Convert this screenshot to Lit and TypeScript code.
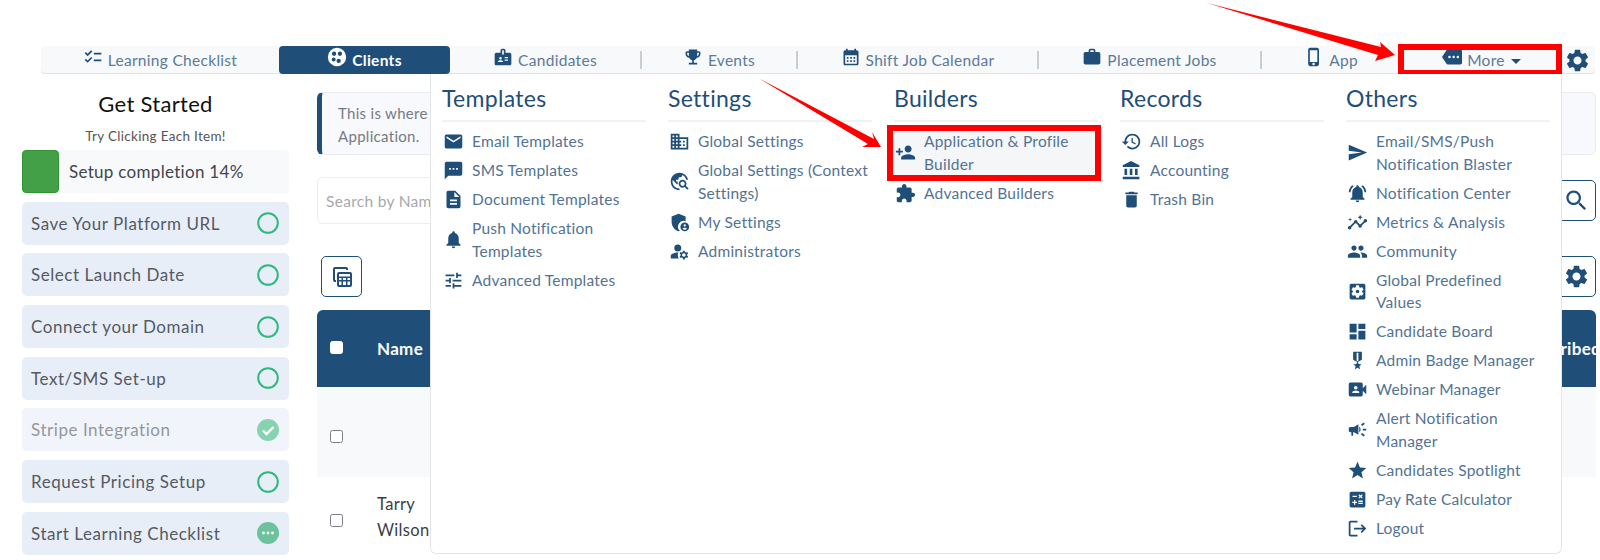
import { LitElement, html, css } from "lit";
import { customElement } from "lit/decorators.js";

const I: Record<string, string> = {
  checklist: "M22 7h-9v2h9V7zm0 8h-9v2h9v-2zM5.54 11L2 7.46l1.41-1.41 2.12 2.12 4.24-4.24 1.41 1.41L5.54 11zm0 8L2 15.46l1.41-1.41 2.12 2.12 4.24-4.24 1.41 1.41L5.54 19z",
  clients: "M12 1a11 11 0 1 0 0 22 11 11 0 0 0 0-22zM8.5 5.5a2.6 2.6 0 1 1 0 5.2 2.6 2.6 0 0 1 0-5.2zm7 0a2.6 2.6 0 1 1 0 5.2 2.6 2.6 0 0 1 0-5.2zM8 12.5a2.4 2.4 0 1 1 0 4.8 2.4 2.4 0 0 1 0-4.8zm6 1.5a2.6 2.6 0 1 1 0 5.2 2.6 2.6 0 0 1 0-5.2z",
  badge: "M20 7h-5V4c0-1.1-.9-2-2-2h-2c-1.1 0-2 .9-2 2v3H4c-1.1 0-2 .9-2 2v11c0 1.1.9 2 2 2h16c1.1 0 2-.9 2-2V9c0-1.1-.9-2-2-2zM9 12c.83 0 1.5.67 1.5 1.5S9.83 15 9 15s-1.5-.67-1.5-1.5S8.17 12 9 12zm3 6H6v-.75c0-1 2-1.5 3-1.5s3 .5 3 1.5V18zm1-9h-2V4h2v5zm5 7.5h-4V15h4v1.5zm0-3h-4V12h4v1.5z",
  trophy: "M19 5h-2V3H7v2H5c-1.1 0-2 .9-2 2v1c0 2.55 1.92 4.63 4.39 4.94.63 1.5 1.98 2.63 3.61 2.96V19H7v2h10v-2h-4v-3.1c1.63-.33 2.98-1.46 3.61-2.96C19.08 12.63 21 10.55 21 8V7c0-1.1-.9-2-2-2zM5 8V7h2v3.82C5.84 10.4 5 9.3 5 8zm14 0c0 1.3-.84 2.4-2 2.82V7h2v1z",
  calendar: "M19 4h-1V2h-2v2H8V2H6v2H5c-1.1 0-2 .9-2 2v14c0 1.1.9 2 2 2h14c1.1 0 2-.9 2-2V6c0-1.1-.9-2-2-2zm0 16H5V10h14v10zM9 14H7v-2h2v2zm4 0h-2v-2h2v2zm4 0h-2v-2h2v2zm-8 4H7v-2h2v2zm4 0h-2v-2h2v2zm4 0h-2v-2h2v2z",
  work: "M20 6h-4V4c0-1.11-.89-2-2-2h-4c-1.11 0-2 .89-2 2v2H4c-1.11 0-1.99.89-1.99 2L2 19c0 1.11.89 2 2 2h16c1.11 0 2-.89 2-2V8c0-1.11-.89-2-2-2zm-6 0h-4V4h4v2z",
  phone: "M15.5 1h-8C6.12 1 5 2.12 5 3.5v17C5 21.88 6.12 23 7.5 23h8c1.38 0 2.5-1.12 2.5-2.5v-17C18 2.12 16.88 1 15.5 1zm-4 21c-.83 0-1.5-.67-1.5-1.5s.67-1.5 1.5-1.5 1.5.67 1.5 1.5-.67 1.5-1.5 1.5zm4.5-4H7V4h9v14z",
  more: "M22 3H7c-.69 0-1.23.35-1.59.88L0 12l5.41 8.11c.36.53.9.89 1.59.89h15c1.1 0 2-.9 2-2V5c0-1.1-.9-2-2-2zM9 13.5c-.83 0-1.5-.67-1.5-1.5s.67-1.5 1.5-1.5 1.5.67 1.5 1.5-.67 1.5-1.5 1.5zm5 0c-.83 0-1.5-.67-1.5-1.5s.67-1.5 1.5-1.5 1.5.67 1.5 1.5-.67 1.5-1.5 1.5zm5 0c-.83 0-1.5-.67-1.5-1.5s.67-1.5 1.5-1.5 1.5.67 1.5 1.5-.67 1.5-1.5 1.5z",
  gear: "M19.14 12.94c.04-.3.06-.61.06-.94 0-.32-.02-.64-.07-.94l2.03-1.58c.18-.14.23-.41.12-.61l-1.92-3.32c-.12-.22-.37-.29-.59-.22l-2.39.96c-.5-.38-1.03-.7-1.62-.94l-.36-2.54c-.04-.24-.24-.41-.48-.41h-3.84c-.24 0-.43.17-.47.41l-.36 2.54c-.59.24-1.13.57-1.62.94l-2.39-.96c-.22-.08-.47 0-.59.22L2.74 8.87c-.12.21-.08.47.12.61l2.03 1.58c-.05.3-.09.63-.09.94s.02.64.07.94l-2.03 1.58c-.18.14-.23.41-.12.61l1.92 3.32c.12.22.37.29.59.22l2.39-.96c.5.38 1.03.7 1.62.94l.36 2.54c.05.24.24.41.48.41h3.84c.24 0 .44-.17.47-.41l.36-2.54c.59-.24 1.13-.56 1.62-.94l2.39.96c.22.08.47 0 .59-.22l1.92-3.32c.12-.22.07-.47-.12-.61l-2.01-1.58zM12 15.6c-1.98 0-3.6-1.62-3.6-3.6s1.62-3.6 3.6-3.6 3.6 1.62 3.6 3.6-1.62 3.6-3.6 3.6z",
  search: "M15.5 14h-.79l-.28-.27C15.41 12.59 16 11.11 16 9.5 16 5.91 13.09 3 9.5 3S3 5.91 3 9.5 5.91 16 9.5 16c1.61 0 3.09-.59 4.23-1.57l.27.28v.79l5 4.99L20.49 19l-4.99-5zm-6 0C7.01 14 5 11.99 5 9.5S7.01 5 9.5 5 14 7.01 14 9.5 11.99 14 9.5 14z",
  columns: "M5 2h11a2 2 0 0 1 2 2v1h-2V4H5v11h1v2H5a2 2 0 0 1-2-2V4a2 2 0 0 1 2-2zM9 7h11a2 2 0 0 1 2 2v11a2 2 0 0 1-2 2H9a2 2 0 0 1-2-2V9a2 2 0 0 1 2-2zm0 2v2.5h11V9H9zm0 4v2h2.5v-2H9zm4 0v2h3v-2h-3zm4.5 0v2H20v-2h-2.5zM9 16.5V20h2.5v-3.5H9zm4 0V20h3v-3.5h-3zm4.5 0V20H20v-3.5h-2.5z",
  mail: "M20 4H4c-1.1 0-1.99.9-1.99 2L2 18c0 1.1.9 2 2 2h16c1.1 0 2-.9 2-2V6c0-1.1-.9-2-2-2zm0 4l-8 5-8-5V6l8 5 8-5v2z",
  sms: "M20 2H4c-1.1 0-1.99.9-1.99 2L2 22l4-4h14c1.1 0 2-.9 2-2V4c0-1.1-.9-2-2-2zM9 11H7V9h2v2zm4 0h-2V9h2v2zm4 0h-2V9h2v2z",
  doc: "M14 2H6c-1.1 0-1.99.9-1.99 2L4 20c0 1.1.89 2 1.99 2H18c1.1 0 2-.9 2-2V8l-6-6zm2 16H8v-2h8v2zm0-4H8v-2h8v2zm-3-5V3.5L18.5 9H13z",
  bell: "M12 22c1.1 0 2-.9 2-2h-4c0 1.1.89 2 2 2zm6-6v-5c0-3.07-1.64-5.64-4.5-6.32V4c0-.83-.67-1.5-1.5-1.5s-1.5.67-1.5 1.5v.68C7.63 5.36 6 7.92 6 11v5l-2 2v1h16v-1l-2-2z",
  tune: "M3 17v2h6v-2H3zM3 5v2h10V5H3zm10 16v-2h8v-2h-8v-2h-2v6h2zM7 9v2H3v2h4v2h2V9H7zm14 4v-2H11v2h10zm-6-4h2V7h4V5h-4V3h-2v6z",
  domain: "M12 7V3H2v18h20V7H12zM6 19H4v-2h2v2zm0-4H4v-2h2v2zm0-4H4V9h2v2zm0-4H4V5h2v2zm4 12H8v-2h2v2zm0-4H8v-2h2v2zm0-4H8V9h2v2zm0-4H8V5h2v2zm10 12h-8v-2h2v-2h-2v-2h2v-2h-2V9h8v10zm-2-8h-2v2h2v-2zm0 4h-2v2h2v-2z",
  explore: "M19.3 16.9c.4-.7.7-1.5.7-2.4 0-2.5-2-4.5-4.5-4.5S11 12 11 14.5s2 4.5 4.5 4.5c.9 0 1.7-.3 2.4-.7l3.2 3.2 1.4-1.4-3.2-3.2zm-3.8.1c-1.4 0-2.5-1.1-2.5-2.5s1.1-2.5 2.5-2.5 2.5 1.1 2.5 2.5-1.1 2.5-2.5 2.5zM12 20v2C6.48 22 2 17.52 2 12S6.48 2 12 2c4.84 0 8.87 3.44 9.8 8h-2.07c-.64-2.46-2.4-4.47-4.73-5.41V5c0 1.1-.9 2-2 2h-2v2c0 .55-.45 1-1 1H8v2h2v3H9l-4.79-4.79C4.08 10.79 4 11.38 4 12c0 4.41 3.59 8 8 8z",
  shield: "M11 2L3 5v6c0 5 3.4 9.7 8 11 .5-.1 1-.3 1.4-.5A6.5 6.5 0 0 1 19 10.6V5l-8-3zM18 12a5 5 0 1 0 0 10 5 5 0 0 0 0-10zm0 2a1.3 1.3 0 1 1 0 2.6 1.3 1.3 0 0 1 0-2.6zm0 6.3c-1 0-1.9-.4-2.4-1.1.1-.8 1.6-1.2 2.4-1.2s2.3.4 2.4 1.2c-.5.7-1.4 1.1-2.4 1.1z",
  manage: "M10 4a4 4 0 1 1 0 8 4 4 0 0 1 0-8zM10.67 13.02C10.45 13.01 10.23 13 10 13c-2.42 0-4.68.67-6.61 1.82-.88.52-1.39 1.5-1.39 2.53V20h9.26c-.79-1.13-1.26-2.51-1.26-4 0-1.07.25-2.07.67-2.98zM20.75 16c0-.22-.03-.42-.06-.63l1.14-1.01-1-1.73-1.45.49c-.32-.27-.68-.48-1.08-.63L18 11h-2l-.3 1.49c-.4.15-.76.36-1.08.63l-1.45-.49-1 1.73 1.14 1.01c-.03.21-.06.41-.06.63s.03.42.06.63l-1.14 1.01 1 1.73 1.45-.49c.32.27.68.48 1.08.63L16 21h2l.3-1.49c.4-.15.76-.36 1.08-.63l1.45.49 1-1.73-1.14-1.01c.03-.21.06-.41.06-.63zM17 18c-1.1 0-2-.9-2-2s.9-2 2-2 2 .9 2 2-.9 2-2 2z",
  personAdd: "M15 12c2.21 0 4-1.79 4-4s-1.79-4-4-4-4 1.79-4 4 1.79 4 4 4zm-9-2V7H4v3H1v2h3v3h2v-3h3v-2H6zm9 4c-2.67 0-8 1.34-8 4v2h16v-2c0-2.66-5.33-4-8-4z",
  puzzle: "M20.5 11H19V7c0-1.1-.9-2-2-2h-4V3.5C13 2.12 11.88 1 10.5 1S8 2.12 8 3.5V5H4c-1.1 0-1.99.9-1.99 2v3.8H3.5c1.49 0 2.7 1.21 2.7 2.7s-1.21 2.7-2.7 2.7H2V20c0 1.1.9 2 2 2h3.8v-1.5c0-1.49 1.21-2.7 2.7-2.7 1.49 0 2.7 1.21 2.7 2.7V22H17c1.1 0 2-.9 2-2v-4h1.5c1.38 0 2.5-1.12 2.5-2.5S21.88 11 20.5 11z",
  history: "M13 3c-4.97 0-9 4.03-9 9H1l3.89 3.89.07.14L9 12H6c0-3.87 3.13-7 7-7s7 3.13 7 7-3.13 7-7 7c-1.93 0-3.68-.79-4.94-2.06l-1.42 1.42C8.27 19.99 10.51 21 13 21c4.97 0 9-4.03 9-9s-4.03-9-9-9zm-1 5v5l4.28 2.54.72-1.21-3.5-2.08V8H12z",
  bank: "M4 10v7h3v-7H4zm6 0v7h3v-7h-3zM2 22h19v-3H2v3zm14-12v7h3v-7h-3zm-4.5-9L2 6v2h19V6l-9.5-5z",
  trash: "M6 19c0 1.1.9 2 2 2h8c1.1 0 2-.9 2-2V7H6v12zM19 4h-3.5l-1-1h-5l-1 1H5v2h14V4z",
  send: "M2.01 21L23 12 2.01 3 2 10l15 2-15 2z",
  bellActive: "M7.58 4.08L6.15 2.65C3.75 4.48 2.17 7.3 2.03 10.5h2c.15-2.65 1.51-4.97 3.55-6.42zm12.39 6.42h2c-.15-3.2-1.73-6.02-4.12-7.85l-1.42 1.43c2.02 1.45 3.39 3.77 3.54 6.42zM18 11c0-3.07-1.64-5.64-4.5-6.32V4c0-.83-.67-1.5-1.5-1.5s-1.5.67-1.5 1.5v.68C7.63 5.36 6 7.92 6 11v5l-2 2v1h16v-1l-2-2v-5zm-6 11c.14 0 .27-.01.4-.04.65-.14 1.18-.58 1.44-1.18.1-.24.15-.5.15-.78h-4c.01 1.1.9 2 2.01 2z",
  insights: "M21 8c-1.45 0-2.26 1.44-1.93 2.51l-3.55 3.56c-.3-.09-.74-.09-1.04 0l-2.55-2.55C12.27 10.45 11.46 9 10 9c-1.45 0-2.27 1.44-1.93 2.52l-4.56 4.55C2.44 15.74 1 16.55 1 18c0 1.1.9 2 2 2 1.45 0 2.26-1.44 1.93-2.51l4.55-4.56c.3.09.74.09 1.04 0l2.55 2.55C12.73 16.55 13.54 18 15 18c1.45 0 2.27-1.44 1.93-2.52l3.56-3.55c1.07.33 2.51-.48 2.51-1.93 0-1.1-.9-2-2-2zM15 9l.94-2.07L18 6l-2.06-.93L15 3l-.92 2.07L12 6l2.08.93zM3.5 11L4 9l2-.5L4 8l-.5-2L3 8l-2 .5L3 9z",
  people: "M16 11c1.66 0 2.99-1.34 2.99-3S17.66 5 16 5c-1.66 0-3 1.34-3 3s1.34 3 3 3zm-8 0c1.66 0 2.99-1.34 2.99-3S9.66 5 8 5C6.34 5 5 6.34 5 8s1.34 3 3 3zm0 2c-2.33 0-7 1.17-7 3.5V19h14v-2.5c0-2.33-4.67-3.5-7-3.5zm8 0c-.29 0-.62.02-.97.05 1.16.84 1.97 1.97 1.97 3.45V19h6v-2.5c0-2.33-4.67-3.5-7-3.5z",
  appSettings: "M12 10c-1.1 0-2 .9-2 2s.9 2 2 2 2-.9 2-2-.9-2-2-2zm7-7H5c-1.11 0-2 .9-2 2v14c0 1.1.89 2 2 2h14c1.11 0 2-.9 2-2V5c0-1.1-.89-2-2-2zm-1.75 9c0 .23-.02.46-.05.68l1.48 1.16c.13.11.17.3.08.45l-1.4 2.42c-.09.15-.27.21-.43.15l-1.74-.7c-.36.28-.76.51-1.18.69l-.26 1.85c-.03.17-.18.3-.35.3h-2.8c-.17 0-.32-.13-.35-.29l-.26-1.85c-.43-.18-.82-.41-1.18-.69l-1.74.7c-.16.06-.34 0-.43-.15l-1.4-2.42c-.09-.15-.05-.34.08-.45l1.48-1.16c-.03-.23-.05-.46-.05-.69 0-.23.02-.46.05-.68l-1.48-1.16c-.13-.11-.17-.3-.08-.45l1.4-2.42c.09-.15.27-.21.43-.15l1.74.7c.36-.28.76-.51 1.18-.69l.26-1.85c.03-.17.18-.3.35-.3h2.8c.17 0 .32.13.35.29l.26 1.85c.43.18.82.41 1.18.69l1.74-.7c.16-.06.34 0 .43.15l1.4 2.42c.09.15.05.34-.08.45l-1.48 1.16c.03.23.05.46.05.69z",
  board: "M3 13h8V3H3v10zm0 8h8v-6H3v6zm10 0h8V11h-8v10zm0-18v6h8V3h-8z",
  medal: "M17 10.43V2H7v8.43c0 .35.18.68.49.86l4.18 2.51-.99 2.34-3.41.29 2.59 2.24L9.07 22 12 20.23 14.93 22l-.78-3.33 2.59-2.24-3.41-.29-.99-2.34 4.18-2.51c.3-.18.48-.5.48-.86zm-4 1.8l-1 .6-1-.6V3h2v9.23z",
  video: "M18 10.48V6c0-1.1-.9-2-2-2H4c-1.1 0-2 .9-2 2v12c0 1.1.9 2 2 2h12c1.1 0 2-.9 2-2v-4.48l4 3.98v-11l-4 3.98zM10 8c1.1 0 2 .9 2 2s-.9 2-2 2-2-.9-2-2 .9-2 2-2zm4 8H6v-.57c0-.81.48-1.53 1.22-1.85.85-.37 1.79-.58 2.78-.58.99 0 1.93.21 2.78.58.74.32 1.22 1.04 1.22 1.85V16z",
  campaign: "M18 11v2h4v-2h-4zm-2 6.61c.96.71 2.21 1.65 3.2 2.39.4-.53.8-1.07 1.2-1.6-.99-.74-2.24-1.68-3.2-2.4-.4.54-.8 1.08-1.2 1.61zM20.4 5.6c-.4-.53-.8-1.07-1.2-1.6-.99.74-2.24 1.68-3.2 2.4.4.53.8 1.07 1.2 1.6.96-.72 2.21-1.65 3.2-2.4zM4 9c-1.1 0-2 .9-2 2v2c0 1.1.9 2 2 2h1v4h2v-4h1l5 3V6L8 9H4zm11.5 3c0-1.33-.58-2.53-1.5-3.35v6.69c.92-.81 1.5-2.01 1.5-3.34z",
  star: "M12 17.27L18.18 21l-1.64-7.03L22 9.24l-7.19-.61L12 2 9.19 8.63 2 9.24l5.46 4.73L5.82 21z",
  calc: "M19 3H5c-1.1 0-2 .9-2 2v14c0 1.1.9 2 2 2h14c1.1 0 2-.9 2-2V5c0-1.1-.9-2-2-2zm-5.97 4.06L14.09 6l1.41 1.41L16.91 6l1.06 1.06-1.41 1.41 1.41 1.41-1.06 1.06-1.41-1.4-1.41 1.41-1.06-1.06 1.41-1.41-1.41-1.42zm-6.78.66h5v1.5h-5v-1.5zM11.5 16h-2v2H8v-2H6v-1.5h2v-2h1.5v2h2V16zm6.5 1.25h-5v-1.5h5v1.5zm0-2.5h-5v-1.5h5v1.5z",
  logout: "M17 7l-1.41 1.41L18.17 11H8v2h10.17l-2.58 2.58L17 17l5-5zM4 5h8V3H4c-1.1 0-2 .9-2 2v14c0 1.1.9 2 2 2h8v-2H4V5z",
};

const tabs = [
  { label: "Learning Checklist", icon: "checklist", w: 238 },
  { label: "Clients", icon: "clients", w: 171, active: true },
  { label: "Candidates", icon: "badge", w: 190, sep: true },
  { label: "Events", icon: "trophy", w: 154, sep: true },
  { label: "Shift Job Calendar", icon: "calendar", w: 239, sep: true },
  { label: "Placement Jobs", icon: "work", w: 221, sep: true },
  { label: "App", icon: "phone", w: 138 },
  { label: "More", icon: "more", w: 160, more: true },
];

const columns = [
  {
    title: "Templates",
    items: [
      ["mail", "Email Templates"],
      ["sms", "SMS Templates"],
      ["doc", "Document Templates"],
      ["bell", "Push Notification Templates"],
      ["tune", "Advanced Templates"],
    ],
  },
  {
    title: "Settings",
    items: [
      ["domain", "Global Settings"],
      ["explore", "Global Settings (Context Settings)"],
      ["shield", "My Settings"],
      ["manage", "Administrators"],
    ],
  },
  {
    title: "Builders",
    items: [
      ["personAdd", "Application & Profile Builder"],
      ["puzzle", "Advanced Builders"],
    ],
  },
  {
    title: "Records",
    items: [
      ["history", "All Logs"],
      ["bank", "Accounting"],
      ["trash", "Trash Bin"],
    ],
  },
  {
    title: "Others",
    items: [
      ["send", "Email/SMS/Push Notification Blaster"],
      ["bellActive", "Notification Center"],
      ["insights", "Metrics & Analysis"],
      ["people", "Community"],
      ["appSettings", "Global Predefined Values"],
      ["board", "Candidate Board"],
      ["medal", "Admin Badge Manager"],
      ["video", "Webinar Manager"],
      ["campaign", "Alert Notification Manager"],
      ["star", "Candidates Spotlight"],
      ["calc", "Pay Rate Calculator"],
      ["logout", "Logout"],
    ],
  },
];

const steps = [
  { label: "Save Your Platform URL", state: "open" },
  { label: "Select Launch Date", state: "open" },
  { label: "Connect your Domain", state: "open" },
  { label: "Text/SMS Set-up", state: "open" },
  { label: "Stripe Integration", state: "done" },
  { label: "Request Pricing Setup", state: "open" },
  { label: "Start Learning Checklist", state: "busy" },
];

const icon = (name: string) => html`<svg class="ico" viewBox="0 0 24 24"><path d=${I[name]}></path></svg>`;

@customElement("app-root")
export class AppRoot extends LitElement {
  static styles = css`
    :host {
      display: block;
      position: relative;
      width: 1600px;
      height: 560px;
      overflow: hidden;
      background: #fff;
      font-family: Lato, "Open Sans", sans-serif;
      font-size: 16px;
      letter-spacing: 0.3px;
      color: #3f4650;
    }
    * { box-sizing: border-box; }
    .ico { fill: currentColor; flex: none; display: block; }

    .nav {
      display: flex;
      margin: 46px 0 0 41px;
      width: 1554px;
      height: 28px;
      background: #f7f9fb;
      border-radius: 4px;
      box-shadow: inset 0 -1px 0 #dfe3e7;
    }
    .tab {
      display: flex;
      align-items: center;
      justify-content: center;
      gap: 5px;
      color: #5c7a99;
      font-size: 15.5px;
    }
    .tab .ico { width: 20px; height: 20px; margin-bottom: 6px; color: #1f4e79; }
    .tab.active {
      background: #1f4e79;
      color: #fff;
      font-weight: 700;
      border-radius: 4px;
    }
    .tab.active .ico { color: #fff; }
    .tab.hl { padding-left: 3px; outline: 6px solid #f00; outline-offset: -4px; }
    .caret {
      width: 0;
      height: 0;
      border: 5px solid transparent;
      border-top: 5px solid #1f4e79;
      border-bottom: 0;
      margin-left: 1px;
      margin-top: 3px;
    }
    .sep {
      align-self: center;
      width: 2px;
      height: 18px;
      background: #c9ced4;
    }
    .navgear { flex: 1; display: flex; align-items: center; justify-content: center; color: #1f4e79; }
    .navgear .ico { width: 27px; height: 27px; }

    .content { display: flex; padding-left: 22px; }
    .side { width: 267px; flex: none; }
    .side h2 {
      margin: 16px 0 0;
      font-size: 22px;
      line-height: 28px;
      font-weight: 400;
      color: #111;
      text-align: center;
    }
    .side p {
      margin: 8px 0 4px;
      font-size: 13.5px;
      line-height: 20px;
      text-align: center;
      color: #555;
    }
    .progress {
      display: flex;
      align-items: center;
      height: 43px;
      background: #f8f9fa;
      border-radius: 4px;
      font-size: 17px;
    }
    .progress i {
      display: block;
      width: 37px;
      height: 100%;
      background: #43a047;
      border: 1px solid #2e9532;
      border-radius: 4px;
      margin-right: 10px;
    }
    .steps { display: grid; gap: 8.7px; margin-top: 8.7px; }
    .step {
      display: flex;
      align-items: center;
      justify-content: space-between;
      height: 43px;
      padding: 0 10px 0 9px;
      background: #e8eef8;
      border-radius: 5px;
      font-size: 17px;
      letter-spacing: 0.55px;
      color: #555a62;
    }
    .step.done { background: #f1f4fb; color: #93989d; }
    .dot { width: 22px; height: 22px; flex: none; }

    .main { width: 1279px; margin-left: 28px; flex: none; }
    .alert {
      height: 63px;
      margin-top: 18px;
      padding: 9px 0 0 16px;
      background: #f8f9fc;
      border: 1px solid #e9ecef;
      border-left: 5px solid #1f4e79;
      border-radius: 6px;
      font-size: 15px;
      line-height: 23px;
      color: #757b82;
    }
    .searchrow { display: flex; align-items: center; margin-top: 22px; height: 47px; }
    .searchbox {
      flex: 1;
      height: 47px;
      padding: 0 8px;
      display: flex;
      align-items: center;
      border: 1px solid #eceef0;
      border-radius: 5px;
      color: #a6a9ad;
      font-size: 15.5px;
    }
    .btn {
      width: 40px;
      height: 41px;
      flex: none;
      display: flex;
      align-items: center;
      justify-content: center;
      border: 1px solid #1f4e79;
      border-radius: 5px;
      color: #1f4e79;
      background: #fff;
    }
    .btn .ico { width: 27px; height: 27px; }
    .tools { display: flex; justify-content: space-between; margin-top: 32px; padding-left: 4px; }
    .tools .btn:first-child { width: 41px; }
    .tools .btn:first-child .ico { width: 24px; height: 24px; }
    .table { margin-top: 13px; }
    .row { display: flex; align-items: center; padding-left: 13px; }
    .head {
      height: 77px;
      background: #1f4e79;
      border-radius: 6px 6px 0 0;
      color: #fff;
      font-weight: 700;
      font-size: 17px;
      overflow: hidden;
    }
    .head span:last-child { margin-left: auto; margin-right: -5px; }
    .box {
      width: 13px;
      height: 13px;
      flex: none;
      margin-right: 34px;
      border: 1px solid #7b7f85;
      border-radius: 2.5px;
      background: #fff;
    }
    .head .box { border-color: #fff; margin-bottom: 3px; }
    .shaded { height: 90px; background: #f8f9fb; }
    .shaded .box { margin-top: 8px; }
    .plain { height: 87px; font-size: 16.5px; line-height: 26px; color: #3a3f46; }
    .plain span { margin-bottom: 7px; }

    .menu {
      position: absolute;
      left: 430px;
      top: 74px;
      width: 1132px;
      height: 480px;
      display: grid;
      grid-template-columns: repeat(5, 204px);
      column-gap: 22px;
      padding: 8px 0 0 11px;
      background: #fff;
      border: 1px solid #e3e5e8;
      border-top: 0;
      border-radius: 0 0 6px 6px;
    }
    .menu h3 {
      margin: 0;
      padding-bottom: 6px;
      border-bottom: 2px solid #f1f2f4;
      font-size: 23px;
      line-height: 32px;
      font-weight: 400;
      color: #1f4e79;
    }
    .list { padding-top: 5px; }
    .item {
      display: flex;
      align-items: center;
      gap: 8px;
      padding: 3.25px 0 3.25px 1px;
      line-height: 22.5px;
      font-size: 15.5px;
      letter-spacing: 0.22px;
      color: #537394;
    }
    .item .ico { width: 21px; height: 21px; color: #1f4e79; }
    .item.hl {
      margin: 0 -1px 0 -5px;
      padding-left: 6px;
      background: #f5f6f8;
      outline: 6px solid #f00;
      outline-offset: -4px;
    }
    .arrows { position: absolute; left: 0; top: 0; width: 1600px; height: 560px; pointer-events: none; }
  `;

  render() {
    return html`
      <div class="nav">
        ${tabs.map(
          (t) => html`
            <div class="tab ${t.active ? "active" : ""} ${t.more ? "hl" : ""}" style="width:${t.w}px">
              ${icon(t.icon)}<span>${t.label}</span>${t.more ? html`<i class="caret"></i>` : ""}
            </div>
            ${t.sep ? html`<i class="sep"></i>` : ""}
          `
        )}
        <div class="navgear">${icon("gear")}</div>
      </div>

      <div class="content">
        <div class="side">
          <h2>Get Started</h2>
          <p>Try Clicking Each Item!</p>
          <div class="progress"><i></i>Setup completion 14%</div>
          <div class="steps">
            ${steps.map(
              (s) => html`<div class="step ${s.state}"><span>${s.label}</span>${this.stepDot(s.state)}</div>`
            )}
          </div>
        </div>

        <div class="main">
          <div class="alert">This is where<br />Application.</div>
          <div class="searchrow">
            <div class="searchbox">Search by Name</div>
            <div class="btn">${icon("search")}</div>
          </div>
          <div class="tools">
            <div class="btn">${icon("columns")}</div>
            <div class="btn">${icon("gear")}</div>
          </div>
          <div class="table">
            <div class="row head"><i class="box"></i><span>Name</span><span>Subscribed</span></div>
            <div class="row shaded"><i class="box"></i></div>
            <div class="row plain"><i class="box"></i><span>Tarry<br />Wilson</span></div>
          </div>
        </div>
      </div>

      <div class="menu">
        ${columns.map(
          (c) => html`
            <div>
              <h3>${c.title}</h3>
              <div class="list">
                ${c.items.map(
                  ([ic, label]) => html`
                    <div class="item ${label.startsWith("Application") ? "hl" : ""}">
                      ${icon(ic)}<span>${label}</span>
                    </div>
                  `
                )}
              </div>
            </div>
          `
        )}
      </div>

      <svg class="arrows" viewBox="0 0 1600 560">
        <polygon fill="#f00" points="1207,3 1381,47 1380,42 1395,55 1375,61 1378,55"></polygon>
        <polygon fill="#f00" points="760,79 874,139 872,132 881,147 862,147 868,144"></polygon>
      </svg>
    `;
  }

  stepDot(state: string) {
    if (state === "open") {
      return html`<svg class="dot" viewBox="0 0 22 22"><circle cx="11" cy="11" r="9.8" fill="none" stroke="#2fb87f" stroke-width="2"></circle></svg>`;
    }
    if (state === "done") {
      return html`<svg class="dot" viewBox="0 0 22 22">
        <circle cx="11" cy="11" r="11" fill="#86d3b0"></circle>
        <path d="M6 11.5l3.5 3.5 7-7" fill="none" stroke="#fff" stroke-width="2.4"></path>
      </svg>`;
    }
    return html`<svg class="dot" viewBox="0 0 22 22">
      <circle cx="11" cy="11" r="11" fill="#6cc29b"></circle>
      <circle cx="6.5" cy="11" r="1.4" fill="#fff"></circle>
      <circle cx="11" cy="11" r="1.4" fill="#fff"></circle>
      <circle cx="15.5" cy="11" r="1.4" fill="#fff"></circle>
    </svg>`;
  }
}
